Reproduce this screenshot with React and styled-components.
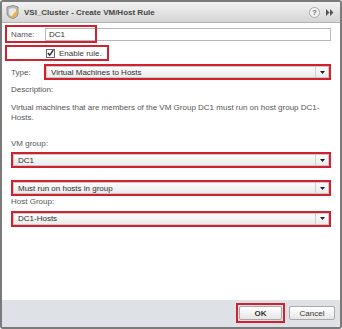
import React from "react"
import styled, { createGlobalStyle } from "styled-components"

const Global = createGlobalStyle`
    html, body {
        margin: 0;
        padding: 0;
        background: #ffffff;
    }
    * {
        box-sizing: border-box;
    }
`;

const Window = styled.div`
    width: 342px;
    height: 329px;
    border: 2px solid #7a7a7a;
    border-radius: 3px;
    display: flex;
    flex-direction: column;
    font-family: "Liberation Sans", Arial, sans-serif;
    font-size: 8px;
    color: #3a3a3a;
    background: #ffffff;
    overflow: hidden;
`;

const TitleBar = styled.div`
    height: 21px;
    flex: none;
    display: flex;
    align-items: center;
    padding: 0 6px 0 4px;
    background: linear-gradient(#f2f2f2, #d5d5d5);
    border-bottom: 1px solid #b4b4b4;
`;

const Title = styled.div`
    flex: 1;
    margin-left: 5px;
    font-size: 8px;
    font-weight: bold;
    color: #444;
`;

const Tools = styled.div`
    display: flex;
    align-items: center;
    gap: 6px;
`;

const Body = styled.div`
    flex: 1;
    padding: 2px 9px 0 9px;
    display: flex;
    flex-direction: column;
`;

const Row = styled.div`
    position: relative;
    display: flex;
    align-items: center;
    height: ${p => p.h || 16}px;
    margin-top: ${p => p.mt || 0}px;
`;

const Label = styled.div`
    width: ${p => p.w ? p.w + "px" : "auto"};
    flex: none;
    color: #555;
`;

const Text = styled.div`
    margin-top: ${p => p.mt || 0}px;
    line-height: ${p => p.lh || 10}px;
    color: #555;
    white-space: nowrap;
`;

const Mark = styled.div`
    position: absolute;
    left: ${p => p.l}px;
    top: ${p => p.t}px;
    width: ${p => p.w}px;
    height: ${p => p.h}px;
    border: 2px solid #d3202f;
    pointer-events: none;
`;

const Input = styled.div`
    flex: 1;
    height: 13px;
    border: 1px solid #b8b8b8;
    display: flex;
    align-items: center;
    padding-left: 3px;
    color: #333;
    background: #fff;
`;

const Check = styled.div`
    width: 9px;
    height: 9px;
    border: 1px solid #6a6a6a;
    background: #fff;
    display: flex;
    align-items: center;
    justify-content: center;
    margin-left: 35px;
    margin-right: 4px;
`;

const SelectBox = styled.div`
    flex: 1;
    height: 16px;
    display: flex;
    border: 2px solid ${p => p.marked ? "#d3202f" : "transparent"};
`;

const SelectFace = styled.div`
    flex: 1;
    display: flex;
    border: 1px solid #c9c9c9;
    background: linear-gradient(#fcfcfc, #ebebeb);
`;

const SelectValue = styled.div`
    flex: 1;
    display: flex;
    align-items: center;
    padding-left: 4px;
    color: #2e2e2e;
`;

const Arrow = styled.div`
    width: 13px;
    border-left: 1px solid #cfcfcf;
    display: flex;
    align-items: center;
    justify-content: center;
`;

const Footer = styled.div`
    height: 27px;
    flex: none;
    background: #dee1e5;
    display: flex;
    align-items: center;
    justify-content: flex-end;
    gap: 4px;
    padding: 0 5px 1px 0;
`;

const ButtonWrap = styled.div`
    border: 2px solid ${p => p.marked ? "#d3202f" : "transparent"};
    padding: 1px;
    display: flex;
`;

const Button = styled.div`
    width: ${p => p.w}px;
    height: 14px;
    border: 1px solid #a9a9a9;
    border-radius: 2px;
    background: linear-gradient(#ffffff, #e6e6e6);
    display: flex;
    align-items: center;
    justify-content: center;
    font-size: 8px;
    font-weight: ${p => p.bold ? "bold" : "normal"};
    color: #333;
`;

const Select = ({ value, marked }) => (
    <SelectBox marked={marked}>
        <SelectFace>
            <SelectValue>{value}</SelectValue>
            <Arrow>
                <svg width="5" height="3" viewBox="0 0 5 3">
                    <path d="M0 0 L5 0 L2.5 3 Z" fill="#222" />
                </svg>
            </Arrow>
        </SelectFace>
    </SelectBox>
)

const App = () => {
    return (
        <>
            <Global />
            <Window>
                <TitleBar>
                    <svg width="13" height="14" viewBox="0 0 13 14">
                        <path d="M1 2 L7 0.5 L12 2 L12 8 Q12 12 7 13.5 Q1 12 1 8 Z" fill="#b9b9b9" stroke="#7d7d7d" strokeWidth="0.8" />
                        <path d="M3 4 L7 3 L10 4 L10 8 Q10 10.5 7 11.5 Q3 10.5 3 8 Z" fill="#e8e8e8" />
                        <path d="M5 12 L11 5 L12 7 L7 13 Z" fill="#f2b323" />
                    </svg>
                    <Title>VSI_Cluster - Create VM/Host Rule</Title>
                    <Tools>
                        <svg width="11" height="11" viewBox="0 0 11 11">
                            <circle cx="5.5" cy="5.5" r="5" fill="#f4f4f4" stroke="#9a9a9a" strokeWidth="0.8" />
                            <text x="5.5" y="8.4" textAnchor="middle" fontSize="8" fontWeight="bold" fontFamily="Liberation Sans, Arial, sans-serif" fill="#707070">?</text>
                        </svg>
                        <svg width="8" height="7" viewBox="0 0 8 7">
                            <path d="M0 0 L3.5 3.5 L0 7 Z M4 0 L7.5 3.5 L4 7 Z" fill="#555" />
                        </svg>
                    </Tools>
                </TitleBar>
                <Body>
                    <Row h={18}>
                        <Label w={34}>Name:</Label>
                        <Input>DC1</Input>
                        <Mark l={-6} t={0} w={92} h={18} />
                    </Row>
                    <Row h={16} mt={2}>
                        <Check>
                            <svg width="8" height="8" viewBox="0 0 8 8">
                                <path d="M1 4 L3 6.5 L7.2 0.8" fill="none" stroke="#222" strokeWidth="1.5" />
                            </svg>
                        </Check>
                        <span>Enable rule.</span>
                        <Mark l={-6} t={0} w={104} h={16} />
                    </Row>
                    <Row h={16} mt={3}>
                        <Label w={33}>Type:</Label>
                        <Select value="Virtual Machines to Hosts" marked />
                    </Row>
                    <Text mt={5} lh={10}>Description:</Text>
                    <Text mt={8} lh={10}>
                        Virtual machines that are members of the VM Group DC1 must run on host group DC1-<br />Hosts.
                    </Text>
                    <Text mt={16} lh={10}>VM group:</Text>
                    <Row h={16} mt={3}>
                        <Select value="DC1" marked />
                    </Row>
                    <Row h={16} mt={12}>
                        <Select value="Must run on hosts in group" marked />
                    </Row>
                    <Text mt={1} lh={10}>Host Group:</Text>
                    <Row h={17} mt={3}>
                        <Select value="DC1-Hosts" marked />
                    </Row>
                </Body>
                <Footer>
                    <ButtonWrap marked>
                        <Button w={43} bold>OK</Button>
                    </ButtonWrap>
                    <Button w={46}>Cancel</Button>
                </Footer>
            </Window>
        </>
    )
}

export default App
